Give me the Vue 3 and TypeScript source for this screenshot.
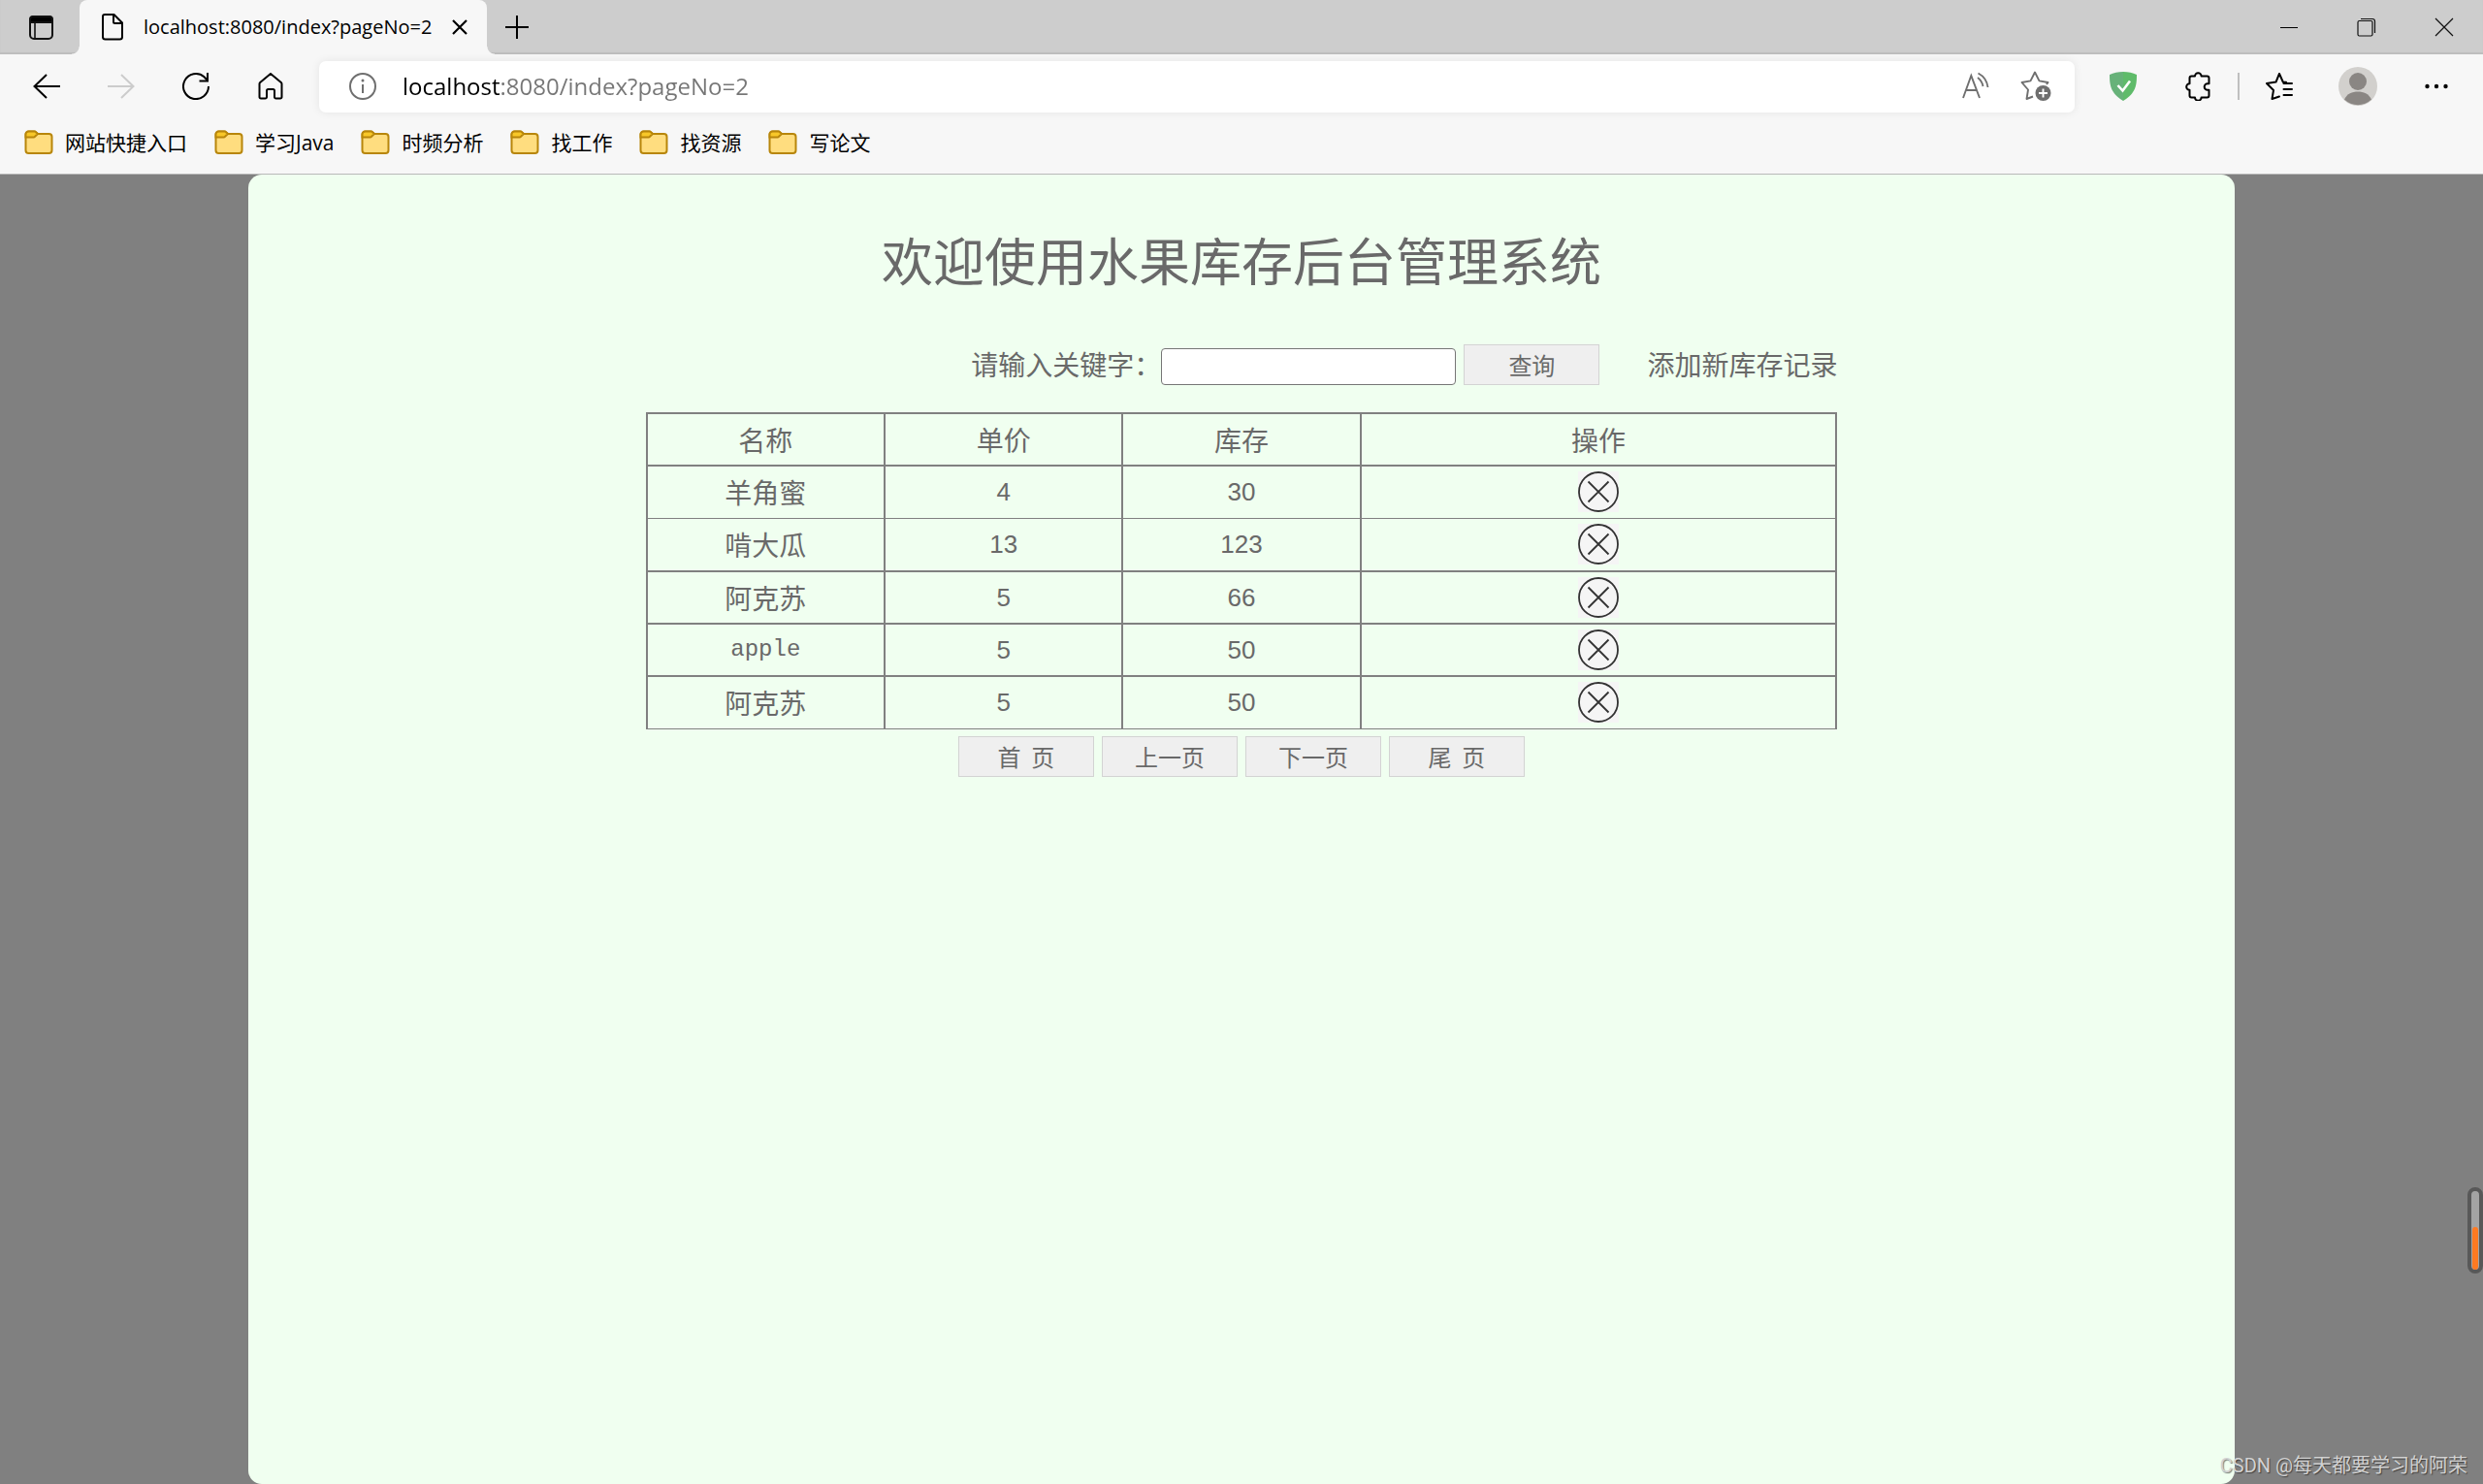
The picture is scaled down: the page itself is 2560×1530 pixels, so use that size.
<script setup lang="ts">
import { ref } from 'vue'

interface Fruit {
  name: string
  price: number
  stock: number
}

const bookmarks: string[] = ['网站快捷入口', '学习Java', '时频分析', '找工作', '找资源', '写论文']

const fruits: Fruit[] = [
  { name: '羊角蜜', price: 4, stock: 30 },
  { name: '啃大瓜', price: 13, stock: 123 },
  { name: '阿克苏', price: 5, stock: 66 },
  { name: 'apple', price: 5, stock: 50 },
  { name: '阿克苏', price: 5, stock: 50 },
]

const pager: string[] = ['首\u00a0\u00a0页', '上一页', '下一页', '尾\u00a0\u00a0页']

const address = ref('localhost:8080/index?pageNo=2')
const keyword = ref('')

const isLatin = (text: string): boolean => /^[\x20-\x7e]+$/.test(text)
</script>

<template>
  <div class="window">
    <header class="chrome">
      <div class="tabstrip">
        <button class="icon-btn" aria-label="标签页操作">
          <svg width="28" height="28" viewBox="0 0 28 28" fill="none" stroke="#111" stroke-width="2">
            <rect x="3" y="3" width="23" height="23" rx="4" />
            <path d="M3 9V6a3 3 0 0 1 3-3h17a3 3 0 0 1 3 3v3z" fill="#000" />
            <path d="M8 9v17" stroke-width="1.6" />
          </svg>
        </button>
        <div class="tab">
          <svg width="28" height="30" viewBox="0 0 28 30" fill="none" stroke="#000" stroke-width="2" stroke-linejoin="round">
            <path d="M6 2h9.500l8.500 8.500V25a2.500 2.500 0 0 1-2.500 2.500h-15A2.500 2.500 0 0 1 4 25V4a2 2 0 0 1 2-2z" />
            <path d="M15 2v7.500a1.500 1.500 0 0 0 1.500 1.500H24" />
          </svg>
          <span class="tab-title">localhost:8080/index?pageNo=2</span>
          <button class="icon-btn" aria-label="关闭标签页">
            <svg width="16" height="16" viewBox="0 0 16 16" stroke="#000" stroke-width="2.200">
              <path d="M1 1l14 14M15 1L1 15" />
            </svg>
          </button>
        </div>
        <button class="icon-btn new-tab" aria-label="新建标签页">
          <svg width="26" height="26" viewBox="0 0 26 26" stroke="#000" stroke-width="2">
            <path d="M13 1v24M1 13h24" />
          </svg>
        </button>
        <div class="window-controls">
          <button class="icon-btn" aria-label="最小化">
            <svg width="20" height="20" viewBox="0 0 20 20" stroke="#000" stroke-width="1"><path d="M1 10.500h18" /></svg>
          </button>
          <button class="icon-btn" aria-label="还原">
            <svg width="20" height="20" viewBox="0 0 20 20" fill="none" stroke="#111" stroke-width="1.200">
              <rect x="1" y="3.500" width="15" height="15.500" rx="1.500" />
              <path d="M4 1.500h12a2.500 2.500 0 0 1 2.500 2.500v12" />
            </svg>
          </button>
          <button class="icon-btn" aria-label="关闭">
            <svg width="20" height="20" viewBox="0 0 20 20" stroke="#111" stroke-width="1.200"><path d="M1 1l18 18M19 1L1 19" /></svg>
          </button>
        </div>
      </div>

      <div class="toolbar">
        <nav class="nav-buttons">
          <button class="icon-btn" aria-label="后退">
            <svg width="28" height="28" viewBox="0 0 28 28" fill="none" stroke="#000" stroke-width="2"><path d="M14 2L1.500 14 14 26M1.500 14H28" /></svg>
          </button>
          <button class="icon-btn" aria-label="前进" disabled>
            <svg width="28" height="28" viewBox="0 0 28 28" fill="none" stroke="#ccc" stroke-width="2"><path d="M14 2l12.500 12L14 26M26.500 14H0" /></svg>
          </button>
          <button class="icon-btn" aria-label="刷新">
            <svg width="28" height="28" viewBox="0 0 28 28" fill="none" stroke="#000" stroke-width="2">
              <path d="M27 14A13 13 0 1 1 22.500 4.200L26 8" />
              <path d="M26 0v8.500h-8.500" />
            </svg>
          </button>
          <button class="icon-btn" aria-label="主页">
            <svg width="28" height="28" viewBox="0 0 28 28" fill="none" stroke="#000" stroke-width="2" stroke-linejoin="round">
              <path d="M2.500 11.500a2 2 0 0 1 .7-1.500L14 1l10.800 9a2 2 0 0 1 .7 1.500V25a1.500 1.500 0 0 1-1.500 1.500h-4.500a1.500 1.500 0 0 1-1.500-1.500v-6.500a1.500 1.500 0 0 0-1.500-1.500h-5A1.500 1.500 0 0 0 10 18.500V25a1.500 1.500 0 0 1-1.500 1.500H4A1.500 1.500 0 0 1 2.500 25z" />
            </svg>
          </button>
        </nav>

        <div class="address">
          <svg width="30" height="30" viewBox="0 0 30 30" fill="none" stroke="#6f6f6f" stroke-width="2">
            <circle cx="15" cy="15" r="13" />
            <path d="M15 13v9" />
            <circle cx="15" cy="9" r="1.500" fill="#6f6f6f" stroke="none" />
          </svg>
          <input v-model="address" class="url" type="text" aria-label="地址栏" />
          <button class="icon-btn" aria-label="朗读此页内容">
            <svg width="30" height="30" viewBox="0 0 30 30" fill="none" stroke="#6f6f6f" stroke-width="1.900">
              <path d="M3 27L11.300 4 20 27M6 19h11" />
              <path d="M18 6a14 14 0 0 1 5.500 9M18.500 1.500A19 19 0 0 1 28.500 16" />
            </svg>
          </button>
          <button class="icon-btn" aria-label="添加到收藏夹">
            <svg width="32" height="32" viewBox="0 0 32 32" fill="none" stroke="#6f6f6f" stroke-width="1.900" stroke-linejoin="round">
              <path d="M13 26.500L6.500 29 8 19.500 1.500 12l9-1.600L15 1.500l4.500 8.900L28.500 12l-1.500 2" />
              <circle cx="23.500" cy="23" r="8" fill="#6f6f6f" stroke="none" />
              <path d="M23.500 18.500v9M19 23h9" stroke="#fff" />
            </svg>
          </button>
        </div>

        <div class="extensions">
          <button class="icon-btn" aria-label="AdGuard">
            <svg width="28" height="30" viewBox="0 0 28 30">
              <path d="M14 0C9 0 4 1.200 0 3c0 11 1 19 14 27z" fill="#67b279" />
              <path d="M14 0c5 0 10 1.200 14 3 0 11-1 19-14 27z" fill="#5fbb6a" />
              <path d="M8.500 14l5 5.500L21 9.500" fill="none" stroke="#fff" stroke-width="2.600" />
            </svg>
          </button>
          <button class="icon-btn" aria-label="扩展">
            <svg width="28" height="30" viewBox="0 0 28 30" fill="none" stroke="#000" stroke-width="2" stroke-linejoin="round">
              <path d="M7.500 4.500h3.500a3.300 3.300 0 0 1 6.600 0h5.900a2 2 0 0 1 2 2v5.700h-1.500a3.300 3.300 0 0 0 0 6.600h1.500v5.700a2 2 0 0 1-2 2h-5.900a3.300 3.300 0 0 1-6.600 0H7.500a2 2 0 0 1-2-2v-5.700a3.300 3.300 0 0 1 0-6.600V6.500a2 2 0 0 1 2-2z" />
            </svg>
          </button>
        </div>
        <span class="divider"></span>
        <div class="account">
          <button class="icon-btn" aria-label="收藏夹">
            <svg width="28" height="28" viewBox="0 0 28 28" fill="none" stroke="#000" stroke-width="2" stroke-linejoin="round" stroke-linecap="round">
              <path d="M14 24.500L6.500 27 8 18 1 11l9.500-1.400L14 1l3.800 8.500 3.200.3M18.500 11H27M18.500 17H27M18.500 23H27" />
            </svg>
          </button>
          <button class="icon-btn" aria-label="个人资料">
            <svg width="40" height="40" viewBox="0 0 40 40">
              <circle cx="20" cy="20" r="20" fill="#d2d0cd" />
              <circle cx="20" cy="15" r="9" fill="#8a8683" />
              <path d="M6 33.500C9 27.500 14 25.500 20 25.500s11 2 14 8A20 20 0 0 1 6 33.500z" fill="#8a8683" />
            </svg>
          </button>
          <button class="icon-btn" aria-label="设置及其他">
            <svg width="28" height="28" viewBox="0 0 28 28">
              <circle cx="4.500" cy="14" r="2.200" /><circle cx="14" cy="14" r="2.200" /><circle cx="23.500" cy="14" r="2.200" />
            </svg>
          </button>
        </div>
      </div>

      <nav class="bookmarks">
        <a v-for="mark in bookmarks" :key="mark" href="#" class="bookmark">
          <svg width="30" height="26" viewBox="0 0 30 26" stroke="#b8860b" stroke-width="2">
            <path d="M1.500 21V4.500a3 3 0 0 1 3-3h6a2 2 0 0 1 1.500.7L14 4h11.500a3 3 0 0 1 3 3v14a3 3 0 0 1-3 3h-21a3 3 0 0 1-3-3z" fill="#ffdd7f" />
            <path d="M1.500 7.500v-3a3 3 0 0 1 3-3h6a2 2 0 0 1 1.500.7L14 4l-3 2.800a2 2 0 0 1-1.400.7z" fill="#f8c728" />
          </svg>
          <span>{{ mark }}</span>
        </a>
      </nav>
    </header>

    <main class="page">
      <section class="panel">
        <h1>欢迎使用水果库存后台管理系统</h1>
        <div class="content">
          <form class="search" @submit.prevent>
            <label for="keyword">请输入关键字：</label>
            <input id="keyword" v-model="keyword" type="text" />
            <button class="btn" type="submit">查询</button>
            <a href="#" class="add">添加新库存记录</a>
          </form>

          <table>
            <thead>
              <tr>
                <th scope="col">名称</th>
                <th scope="col">单价</th>
                <th scope="col">库存</th>
                <th scope="col" class="wide">操作</th>
              </tr>
            </thead>
            <tbody>
              <tr v-for="(fruit, i) in fruits" :key="i">
                <td><a href="#" class="name" :class="{ latin: isLatin(fruit.name) }">{{ fruit.name }}</a></td>
                <td class="num">{{ fruit.price }}</td>
                <td class="num">{{ fruit.stock }}</td>
                <td>
                  <button class="delete" type="button" aria-label="删除">
                    <svg width="42" height="42" viewBox="0 0 42 42" fill="none" stroke="#333" stroke-width="1.800">
                      <circle cx="21" cy="21" r="20" />
                      <path d="M10.500 10.500l21 21M31.500 10.500l-21 21" />
                    </svg>
                  </button>
                </td>
              </tr>
            </tbody>
          </table>

          <div class="pager">
            <button v-for="label in pager" :key="label" class="btn" type="button">{{ label }}</button>
          </div>
        </div>
      </section>
    </main>

    <div class="gauge"><div class="gauge-fill"></div></div>
    <div class="watermark">CSDN @每天都要学习的阿荣</div>
  </div>
</template>

<style>
body {
  margin: 0;
  background: #808080;
}
</style>

<style scoped>
.window {
  position: relative;
  display: flex;
  flex-direction: column;
  min-height: 100vh;
  font-family: "Open Sans", "Noto Sans CJK SC", sans-serif;
  color: #000;
}

a {
  color: inherit;
  text-decoration: none;
}

.icon-btn {
  display: flex;
  flex: none;
  padding: 0;
  border: 0;
  background: none;
}

svg {
  display: block;
  flex: none;
}

.chrome {
  background: #f7f7f7;
  border-bottom: 1px solid #b9b9b9;
}

.tabstrip {
  display: flex;
  align-items: center;
  height: 56px;
  box-sizing: border-box;
  padding-left: 28px;
  background: #cdcdcd;
  box-shadow: inset 0 -2px 1px #bdbdbd;
}

.tab {
  position: relative;
  display: flex;
  align-items: center;
  box-sizing: border-box;
  width: 420px;
  height: 56px;
  margin-left: 26px;
  padding: 0 20px;
  border-radius: 8px 8px 0 0;
  background: #f7f7f7;
}

.tab::before,
.tab::after {
  content: "";
  position: absolute;
  bottom: 0;
  width: 8px;
  height: 8px;
}

.tab::before {
  right: 100%;
  background: radial-gradient(circle at 0 0, transparent 7px, #f7f7f7 8px);
}

.tab::after {
  left: 100%;
  background: radial-gradient(circle at 100% 0, transparent 7px, #f7f7f7 8px);
}

.tab-title {
  flex: 1;
  margin-left: 18px;
  font-size: 20px;
  line-height: 28px;
  white-space: nowrap;
}

.new-tab {
  margin-left: 18px;
}

.window-controls {
  display: flex;
  gap: 60px;
  margin-left: auto;
  padding-right: 30px;
}

.toolbar {
  display: flex;
  align-items: center;
  height: 66px;
  padding: 0 34px;
}

.nav-buttons,
.extensions {
  display: flex;
  align-items: center;
  gap: 49px;
}

.account {
  display: flex;
  align-items: center;
  gap: 47px;
}

.address {
  display: flex;
  flex: 1;
  align-items: center;
  gap: 32px;
  height: 53px;
  margin: 0 36px;
  padding: 0 24px 0 30px;
  border-radius: 7px;
  background: #fff;
  box-shadow: 0 0 10px rgba(0, 0, 0, 0.08);
}

.url {
  flex: 1;
  min-width: 0;
  padding: 0;
  border: 0;
  outline: 0;
  margin-left: -6px;
  font: 24px/36px "Open Sans", sans-serif;
  color: transparent;
  background: linear-gradient(90deg, #000 102px, #767676 102px);
  background-clip: text;
  -webkit-background-clip: text;
}

.divider {
  width: 2px;
  height: 28px;
  margin: 0 27px;
  background: #bfbfbf;
}

.bookmarks {
  display: flex;
  gap: 28px;
  height: 57px;
  padding: 0 25px;
}

.bookmark {
  display: flex;
  align-items: center;
  height: 50px;
  gap: 12px;
  font-size: 21px;
  line-height: 30px;
}

.page {
  display: flex;
  flex: 1;
  justify-content: center;
  background: #808080;
}

.panel {
  width: 80%;
  border-radius: 14px;
  background: #f0fff0;
  color: #696969;
  font-family: "Noto Sans CJK SC", sans-serif;
}

h1 {
  margin: 51px 0;
  font-size: 53px;
  font-weight: 400;
  line-height: 73px;
  text-align: center;
}

.content {
  width: 60%;
  margin: 0 auto;
}

.search {
  display: flex;
  align-items: flex-end;
  justify-content: flex-end;
  font-size: 28px;
  line-height: 40px;
}

.search label,
.add {
  align-self: flex-start;
}

.search input {
  box-sizing: border-box;
  width: 304px;
  height: 38px;
  margin-right: 8px;
  border: 1px solid #767676;
  border-radius: 4px;
  background: #fff;
  font-size: 22px;
}

.add {
  margin-left: 49px;
}

.btn {
  box-sizing: border-box;
  width: 140px;
  height: 42px;
  padding: 0;
  border: 1px solid #d3d3d3;
  background: #efefef;
  color: #696969;
  font: 24px/36px "Noto Sans CJK SC", sans-serif;
}

table {
  width: 100%;
  margin-top: 28px;
  border-collapse: collapse;
  table-layout: fixed;
  font-size: 28px;
  line-height: 42px;
}

tr {
  height: 54px;
}

tbody tr:nth-child(2) {
  height: 55px;
}

th,
td {
  box-sizing: border-box;
  width: 20%;
  padding: 0;
  border: solid #808080;
  border-width: 0 2px 2px;
  font-weight: 400;
  text-align: center;
}

th {
  border-top-width: 2px;
}

tbody tr:nth-child(4n + 1) td {
  border-bottom-width: 1px;
}

.wide {
  width: 40%;
}

.name {
  display: block;
}

.num {
  font-family: "Liberation Sans", sans-serif;
  font-size: 26px;
}

.latin {
  font-family: "Liberation Mono", monospace;
  font-size: 24px;
}

.delete {
  display: block;
  margin: 0 auto;
  padding: 0;
  border: 0;
  background: #f5f5f5;
}

.pager {
  display: flex;
  justify-content: center;
  gap: 8px;
  margin-top: 7px;
}

.gauge {
  position: absolute;
  right: 0;
  bottom: 217px;
  display: flex;
  align-items: flex-end;
  justify-content: center;
  box-sizing: border-box;
  width: 16px;
  height: 89px;
  border: 4px solid #585858;
  border-radius: 8px;
  background: #a3a3a3;
}

.gauge-fill {
  width: 6px;
  height: 44px;
  border-radius: 3px;
  background: #ff7a22;
}

.watermark {
  position: absolute;
  right: 16px;
  bottom: 4px;
  color: #d2d2d2;
  font: 20px/30px Roboto, "Noto Sans CJK SC", sans-serif;
  text-shadow: 1px 1px 1px rgba(0, 0, 0, 0.5);
}
</style>
